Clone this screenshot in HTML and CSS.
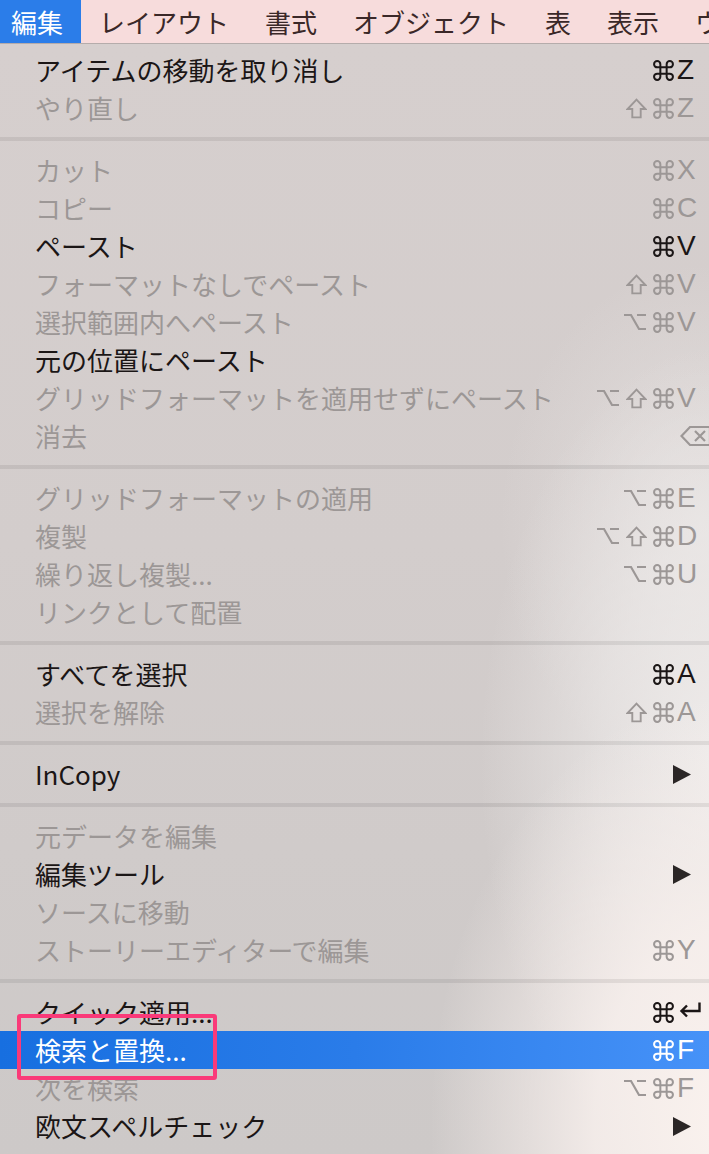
FILE: index.html
```html
<!DOCTYPE html>
<html lang="ja">
<head>
<meta charset="utf-8">
<title>編集メニュー</title>
<link rel="stylesheet" href="styles.css">
</head>
<body>
<svg class="defs" width="0" height="0" aria-hidden="true">
  <symbol id="cmd" viewBox="0 0 20 20"><path d="M7 7 V4 A3 3 0 1 0 4 7 H16 A3 3 0 1 0 13 4 V16 A3 3 0 1 0 16 13 H4 A3 3 0 1 0 7 16 Z" fill="none" stroke="currentColor" stroke-width="1.9"/></symbol>
  <symbol id="shift" viewBox="0 0 20 20"><polygon points="10,1.5 18.5,10.5 14,10.5 14,18.5 6,18.5 6,10.5 1.5,10.5" fill="none" stroke="currentColor" stroke-width="1.8"/></symbol>
  <symbol id="opt" viewBox="0 0 24 20"><path d="M1 3 H8 L16 17 H23 M14 3 H23" fill="none" stroke="currentColor" stroke-width="2.2"/></symbol>
  <symbol id="del" viewBox="0 0 32 22"><path d="M10 2 H30 V20 H10 L1.5 11 Z M15 6 L25 16 M25 6 L15 16" fill="none" stroke="currentColor" stroke-width="2.2"/></symbol>
  <symbol id="ret" viewBox="0 0 24 16"><path d="M21.5 0.5 V9 H4 M9 3.5 L3.5 9 L9 14.5" fill="none" stroke="currentColor" stroke-width="2.4"/></symbol>
  <symbol id="tri" viewBox="0 0 18 19"><polygon points="0,0 18,9.5 0,19" fill="currentColor"/></symbol>
</svg>

<header class="menubar">
  <span class="mb-item mb-active">編集</span>
  <span class="mb-item">レイアウト</span>
  <span class="mb-item">書式</span>
  <span class="mb-item">オブジェクト</span>
  <span class="mb-item">表</span>
  <span class="mb-item">表示</span>
  <span class="mb-item">ウィンドウ</span>
</header>

<main class="menu">
  <div class="item"><span class="label">アイテムの移動を取り消し</span><span class="mods"><svg class="i-cmd"><use href="#cmd"/></svg></span><span class="key">Z</span></div>
  <div class="item dis"><span class="label">やり直し</span><span class="mods"><svg class="i-shift"><use href="#shift"/></svg><svg class="i-cmd"><use href="#cmd"/></svg></span><span class="key">Z</span></div>
  <div class="sep"></div>

  <div class="item dis"><span class="label">カット</span><span class="mods"><svg class="i-cmd"><use href="#cmd"/></svg></span><span class="key">X</span></div>
  <div class="item dis"><span class="label">コピー</span><span class="mods"><svg class="i-cmd"><use href="#cmd"/></svg></span><span class="key">C</span></div>
  <div class="item"><span class="label">ペースト</span><span class="mods"><svg class="i-cmd"><use href="#cmd"/></svg></span><span class="key">V</span></div>
  <div class="item dis"><span class="label">フォーマットなしでペースト</span><span class="mods"><svg class="i-shift"><use href="#shift"/></svg><svg class="i-cmd"><use href="#cmd"/></svg></span><span class="key">V</span></div>
  <div class="item dis"><span class="label">選択範囲内へペースト</span><span class="mods"><svg class="i-opt"><use href="#opt"/></svg><svg class="i-cmd"><use href="#cmd"/></svg></span><span class="key">V</span></div>
  <div class="item"><span class="label">元の位置にペースト</span><span class="key"></span></div>
  <div class="item dis"><span class="label">グリッドフォーマットを適用せずにペースト</span><span class="mods"><svg class="i-opt"><use href="#opt"/></svg><svg class="i-shift"><use href="#shift"/></svg><svg class="i-cmd"><use href="#cmd"/></svg></span><span class="key">V</span></div>
  <div class="item dis"><span class="label">消去</span><span class="key"><svg class="i-del"><use href="#del"/></svg></span></div>
  <div class="sep"></div>

  <div class="item dis"><span class="label">グリッドフォーマットの適用</span><span class="mods"><svg class="i-opt"><use href="#opt"/></svg><svg class="i-cmd"><use href="#cmd"/></svg></span><span class="key">E</span></div>
  <div class="item dis"><span class="label">複製</span><span class="mods"><svg class="i-opt"><use href="#opt"/></svg><svg class="i-shift"><use href="#shift"/></svg><svg class="i-cmd"><use href="#cmd"/></svg></span><span class="key">D</span></div>
  <div class="item dis"><span class="label">繰り返し複製...</span><span class="mods"><svg class="i-opt"><use href="#opt"/></svg><svg class="i-cmd"><use href="#cmd"/></svg></span><span class="key">U</span></div>
  <div class="item dis"><span class="label">リンクとして配置</span><span class="key"></span></div>
  <div class="sep"></div>

  <div class="item"><span class="label">すべてを選択</span><span class="mods"><svg class="i-cmd"><use href="#cmd"/></svg></span><span class="key">A</span></div>
  <div class="item dis"><span class="label">選択を解除</span><span class="mods"><svg class="i-shift"><use href="#shift"/></svg><svg class="i-cmd"><use href="#cmd"/></svg></span><span class="key">A</span></div>
  <div class="sep"></div>

  <div class="item"><span class="label">InCopy</span><span class="key"><svg class="i-tri"><use href="#tri"/></svg></span></div>
  <div class="sep"></div>

  <div class="item dis"><span class="label">元データを編集</span><span class="key"></span></div>
  <div class="item"><span class="label">編集ツール</span><span class="key"><svg class="i-tri"><use href="#tri"/></svg></span></div>
  <div class="item dis"><span class="label">ソースに移動</span><span class="key"></span></div>
  <div class="item dis"><span class="label">ストーリーエディターで編集</span><span class="mods"><svg class="i-cmd"><use href="#cmd"/></svg></span><span class="key">Y</span></div>
  <div class="sep"></div>

  <div class="item"><span class="label">クイック適用...</span><span class="mods"><svg class="i-cmd"><use href="#cmd"/></svg></span><span class="key"><svg class="i-ret"><use href="#ret"/></svg></span></div>
  <div class="item sel"><span class="label">検索と置換...</span><span class="mods"><svg class="i-cmd"><use href="#cmd"/></svg></span><span class="key">F</span></div>
  <div class="item dis"><span class="label">次を検索</span><span class="mods"><svg class="i-opt"><use href="#opt"/></svg><svg class="i-cmd"><use href="#cmd"/></svg></span><span class="key">F</span></div>
  <div class="item"><span class="label">欧文スペルチェック</span><span class="key"><svg class="i-tri"><use href="#tri"/></svg></span></div>

  <div class="callout"></div>
</main>
</body>
</html>
```

FILE: styles.css
```css
html, body {
  margin: 0;
  padding: 0;
}

body {
  width: 709px;
  height: 1154px;
  overflow: hidden;
  font-family: "Noto Sans CJK JP", "Noto Sans", sans-serif;
  background: #d3cdcc;
}

.defs {
  position: absolute;
  width: 0;
  height: 0;
  overflow: hidden;
}

/* ---------- menu bar ---------- */
.menubar {
  display: flex;
  height: 43px;
  border-bottom: 1px solid #b5acab;
  background: #f7dcdc;
  white-space: nowrap;
  overflow: hidden;
}

.mb-item {
  padding: 0 18px;
  font-size: 26px;
  line-height: 43px;
  color: #3a2828;
  flex: none;
}

.mb-active {
  padding-left: 11px;
  background: #2b7de9;
  color: #ffffff;
}

/* ---------- menu ---------- */
.menu {
  position: relative;
  height: 1110px;
  padding-top: 7px;
  box-sizing: border-box;
  background:
    radial-gradient(ellipse 300px 430px at 730px 1080px, rgba(250, 242, 238, 1) 0%, rgba(248, 240, 237, 0.85) 45%, rgba(248, 240, 237, 0) 100%),
    radial-gradient(ellipse 240px 420px at 720px 720px, rgba(240, 237, 236, 0.95) 0%, rgba(238, 235, 234, 0.6) 50%, rgba(238, 235, 234, 0) 100%),
    radial-gradient(ellipse 200px 260px at 700px 480px, rgba(232, 228, 227, 0.8) 0%, rgba(232, 228, 227, 0) 100%),
    linear-gradient(180deg, #d6cfce 0%, #d3cdcc 45%, #cdc9c8 100%);
}

.item {
  display: flex;
  align-items: center;
  height: 38px;
  padding-left: 35px;
  color: #1b1616;
  white-space: nowrap;
}

.item.dis {
  color: #9c9796;
}

.item.sel {
  color: #ffffff;
  background: linear-gradient(90deg, #176fe0 0%, #2a7ce9 50%, #4692f8 100%);
}

.label {
  flex: 1;
  font-size: 26px;
  line-height: 38px;
}

.mods {
  display: flex;
  align-items: center;
  gap: 6px;
  padding-right: 2px;
}

.key {
  display: flex;
  align-items: center;
  width: 33px;
  flex: none;
  padding-left: 1px;
  box-sizing: border-box;
  font-family: "Liberation Sans", "DejaVu Sans", sans-serif;
  font-size: 28px;
  line-height: 38px;
}

.i-cmd {
  width: 21px;
  height: 21px;
}

.i-shift {
  width: 21px;
  height: 21px;
}

.i-opt {
  width: 24px;
  height: 20px;
}

.i-del {
  width: 32px;
  height: 22px;
  margin-left: 3px;
  flex: none;
}

.i-ret {
  width: 24px;
  height: 16px;
  margin-left: 1px;
  margin-top: -4px;
  flex: none;
}

.i-tri {
  width: 18px;
  height: 19px;
  margin-left: -4px;
  color: #2b2626;
}

.sep {
  height: 4px;
  margin: 10px 0;
  background: rgba(0, 0, 0, 0.075);
}

/* annotation box drawn over the menu */
.callout {
  position: absolute;
  left: 17px;
  top: 970px;
  width: 200px;
  height: 66px;
  box-sizing: border-box;
  border: 4px solid #fa3a79;
  border-radius: 3px;
}
```
